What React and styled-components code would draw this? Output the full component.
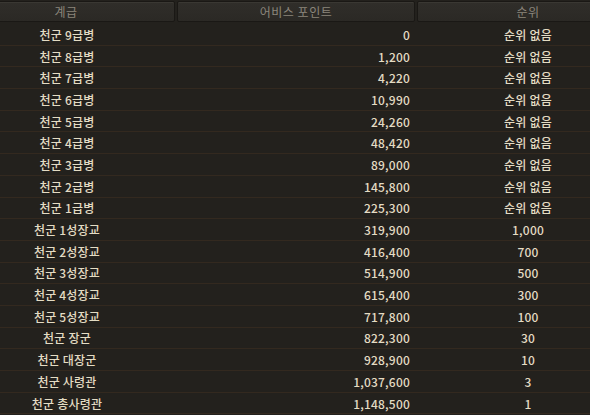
import React from "react";
import styled, { createGlobalStyle } from "styled-components";

const Global = createGlobalStyle`
  html, body { margin: 0; padding: 0; background: #23211d; }
  body { width: 590px; height: 415px; overflow: hidden; }
`;

const Viewport = styled.div`
  width: 590px;
  height: 415px;
  overflow: hidden;
  background: #23211d;
  font-family: "Noto Sans CJK KR", "Noto Sans", sans-serif;
`;

const Table = styled.div`
  margin-left: -43px;
  width: 682px;
  display: grid;
  grid-template-columns: 220px 240px 222px;
`;

const HeadCell = styled.div`
  height: 21px;
  margin: 1px ${(p) => p.$gap || 0}px 2px 0;
  display: flex;
  align-items: center;
  justify-content: center;
  background: linear-gradient(#302e2a, #2b2925);
  border: 1px solid #1a1815;
  box-shadow: inset 0 1px 0 #3a3833;
  border-radius: 2px;
  box-sizing: border-box;
  color: #8b867c;
  font-size: 12px;
  letter-spacing: 0.5px;
`;

const Row = styled.div`
  display: contents;
`;

const Cell = styled.div`
  height: 21.7px;
  box-sizing: border-box;
  border-bottom: 1px solid #33291f;
  display: flex;
  align-items: center;
  justify-content: ${(p) => p.$align || "center"};
  padding-right: ${(p) => p.$pr || 0}px;
  color: #e4dcc4;
  font-size: 12px;
  font-weight: 500;
  letter-spacing: 0.2px;
`;

const data = [
  ["천군 9급병", "0", "순위 없음"],
  ["천군 8급병", "1,200", "순위 없음"],
  ["천군 7급병", "4,220", "순위 없음"],
  ["천군 6급병", "10,990", "순위 없음"],
  ["천군 5급병", "24,260", "순위 없음"],
  ["천군 4급병", "48,420", "순위 없음"],
  ["천군 3급병", "89,000", "순위 없음"],
  ["천군 2급병", "145,800", "순위 없음"],
  ["천군 1급병", "225,300", "순위 없음"],
  ["천군 1성장교", "319,900", "1,000"],
  ["천군 2성장교", "416,400", "700"],
  ["천군 3성장교", "514,900", "500"],
  ["천군 4성장교", "615,400", "300"],
  ["천군 5성장교", "717,800", "100"],
  ["천군 장군", "822,300", "30"],
  ["천군 대장군", "928,900", "10"],
  ["천군 사령관", "1,037,600", "3"],
  ["천군 총사령관", "1,148,500", "1"],
];

export default function App() {
  return (
    <Viewport>
      <Global />
      <Table>
        <HeadCell $gap={2}>계급</HeadCell>
        <HeadCell $gap={2}>어비스 포인트</HeadCell>
        <HeadCell>순위</HeadCell>
        {data.map(([rank, pts, pos]) => (
          <Row key={rank}>
            <Cell>{rank}</Cell>
            <Cell $align="flex-end" $pr={7}>{pts}</Cell>
            <Cell>{pos}</Cell>
          </Row>
        ))}
      </Table>
    </Viewport>
  );
}
